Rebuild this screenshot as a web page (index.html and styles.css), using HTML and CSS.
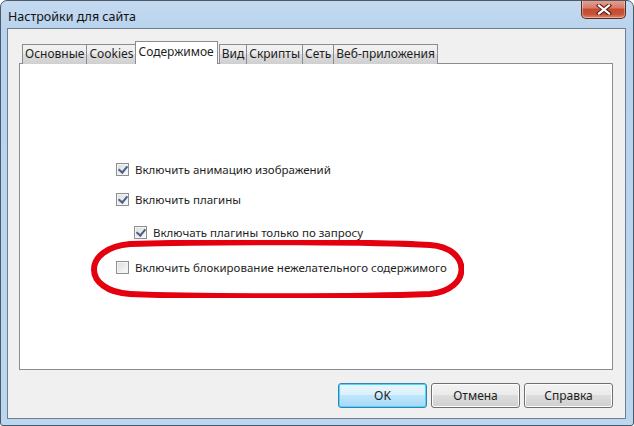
FILE: index.html
```html
<!DOCTYPE html>
<html lang="ru">
<head>
<meta charset="UTF-8" />
<title>Настройки для сайта</title>
<link rel="stylesheet" href="styles.css">
</head>
<body>
<div class="window">
  <div class="titlebar">
    <span class="title">Настройки для сайта</span>
    <div class="close">
      <svg width="16" height="11" viewBox="0 0 16 11">
        <path d="M3 1.5 L13 9.5 M13 1.5 L3 9.5" stroke="#5a1a14" stroke-width="4.2" stroke-linecap="square" fill="none" />
        <path d="M3 1.5 L13 9.5 M13 1.5 L3 9.5" stroke="#fff" stroke-width="2.2" stroke-linecap="square" fill="none" />
      </svg>
    </div>
  </div>

  <div class="client">
    <div class="tabs">
      <span class="tab">Основные</span>
      <span class="tab">Cookies</span>
      <span class="tab active">Содержимое</span>
      <span class="tab">Вид</span>
      <span class="tab">Скрипты</span>
      <span class="tab">Сеть</span>
      <span class="tab">Веб-приложения</span>
    </div>

    <section class="panel">
      <div class="options">
        <div class="option first"><span class="box checked"></span>Включить анимацию изображений</div>
        <div class="option"><span class="box checked"></span>Включить плагины</div>
        <div class="option sub"><span class="box checked"></span>Включать плагины только по запросу</div>
        <div class="option marked">
          <span class="box"></span>Включить блокирование нежелательного содержимого
          <!-- красная обводка поверх пункта -->
          <svg class="oval" width="374" height="58" viewBox="0 0 374 58">
            <path d="M40 4 C140 1, 290 2, 340 5 C382 8, 382 50, 340 54 C270 57, 110 57, 40 54 C-8 51, -8 8, 40 4 Z"
                  fill="none" stroke="#e4000f" stroke-width="6" />
          </svg>
        </div>
      </div>
    </section>

    <div class="buttons">
      <span class="btn default">OK</span>
      <span class="btn">Отмена</span>
      <span class="btn">Справка</span>
    </div>
  </div>
</div>
</body>
</html>
```

FILE: styles.css
```css
body {
  margin: 0;
  font-family: 'Noto Sans', 'Open Sans', sans-serif;
  font-size: 11.5px;
  color: #1e1e1e;
  background: #fff;
}
.window {
  width: 634px;
  height: 426px;
  box-sizing: border-box;
  border: 1px solid #4a5a6a;
  border-radius: 7px 7px 3px 3px;
  background: linear-gradient(#c4daf0, #b9d3ee 30px, #bcd6f0);
  display: flex;
  flex-direction: column;
  overflow: hidden;
}
.titlebar {
  height: 27px;
  display: flex;
  justify-content: space-between;
  align-items: flex-start;
  padding-left: 7px;
  padding-right: 7px;
}
.title {
  margin-top: 7px;
  color: #111;
  font-size: 12.5px;
}
.close {
  width: 45px;
  height: 19px;
  box-sizing: border-box;
  margin-top: -1px;
  border: 1px solid #5e2a24;
  border-top: none;
  border-radius: 0 0 5px 5px;
  background: linear-gradient(#e8a493, #d77a64 45%, #c34a32 50%, #c9533a 80%, #e08a6a);
  box-shadow: inset 0 0 0 1px rgb(255 255 255 / 0.35);
  display: flex;
  align-items: center;
  justify-content: center;
}
.client {
  flex: 1;
  margin: 0 7px 6px 6px;
  border: 1px solid #6f7f90;
  background: #f0f0f0;
  padding: 12px 12px 0 11px;
  display: flex;
  flex-direction: column;
}
.tabs {
  display: flex;
  align-items: flex-end;
  height: 23px;
  padding-left: 3px;
  position: relative;
  z-index: 1;
  margin-bottom: -1px;
  font-size: 12px;
}
.tab {
  height: 19px;
  padding: 0 2px;
  line-height: 18px;
  border: 1px solid #898c95;
  border-bottom: none;
  margin-right: -1px;
  background: linear-gradient(#f2f2f2, #ebebeb 50%, #dddddd 50%, #cfcfcf);
}
.tab.active {
  height: 22px;
  line-height: 20px;
  padding: 0 3px;
  margin: 0 1px 0 -1px;
  background: #fff;
  border-color: #898c95;
}
.panel {
  height: 305px;
  background: #fff;
  border: 1px solid #898c95;
}
.options {
  padding: 98px 0 0 96px;
}
.option {
  display: flex;
  align-items: center;
  height: 14px;
  margin-bottom: 19px;
}
.option.first {
  margin-bottom: 16px;
}
.option.sub {
  margin-left: 18px;
}
.option.marked {
  position: relative;
  margin-top: 21px;
}
.box {
  width: 13px;
  height: 13px;
  box-sizing: border-box;
  border: 1px solid #8e8f8f;
  background: linear-gradient(135deg, #dcdcdc, #fbfbfb);
  box-shadow: inset 0 0 0 1px #f4f4f4;
  margin-right: 6px;
  flex: none;
  display: flex;
  align-items: center;
  justify-content: center;
}
.box.checked::after {
  content: "";
  width: 4px;
  height: 7px;
  border: solid #4a5f8a;
  border-width: 0 2px 2px 0;
  transform: translateY(-1px) rotate(40deg);
}
.oval {
  position: absolute;
  left: -26px;
  top: -20px;
}
.buttons {
  display: flex;
  justify-content: flex-end;
  gap: 4px;
  margin-top: 13px;
}
.btn {
  width: 89px;
  height: 25px;
  box-sizing: border-box;
  border: 1px solid #707070;
  border-radius: 3px;
  background: linear-gradient(#f2f2f2, #ebebeb 50%, #dddddd 50%, #cfcfcf);
  box-shadow: inset 0 0 0 1px #fcfcfc;
  text-align: center;
  line-height: 23px;
  font-size: 12px;
}
.btn.default {
  border-color: #3c7fb1;
  box-shadow: inset 0 0 0 1px #48d8fb;
  background: linear-gradient(#eaf6fd, #d9f0fc 50%, #bee6fd 50%, #a7d9f5);
}
```
